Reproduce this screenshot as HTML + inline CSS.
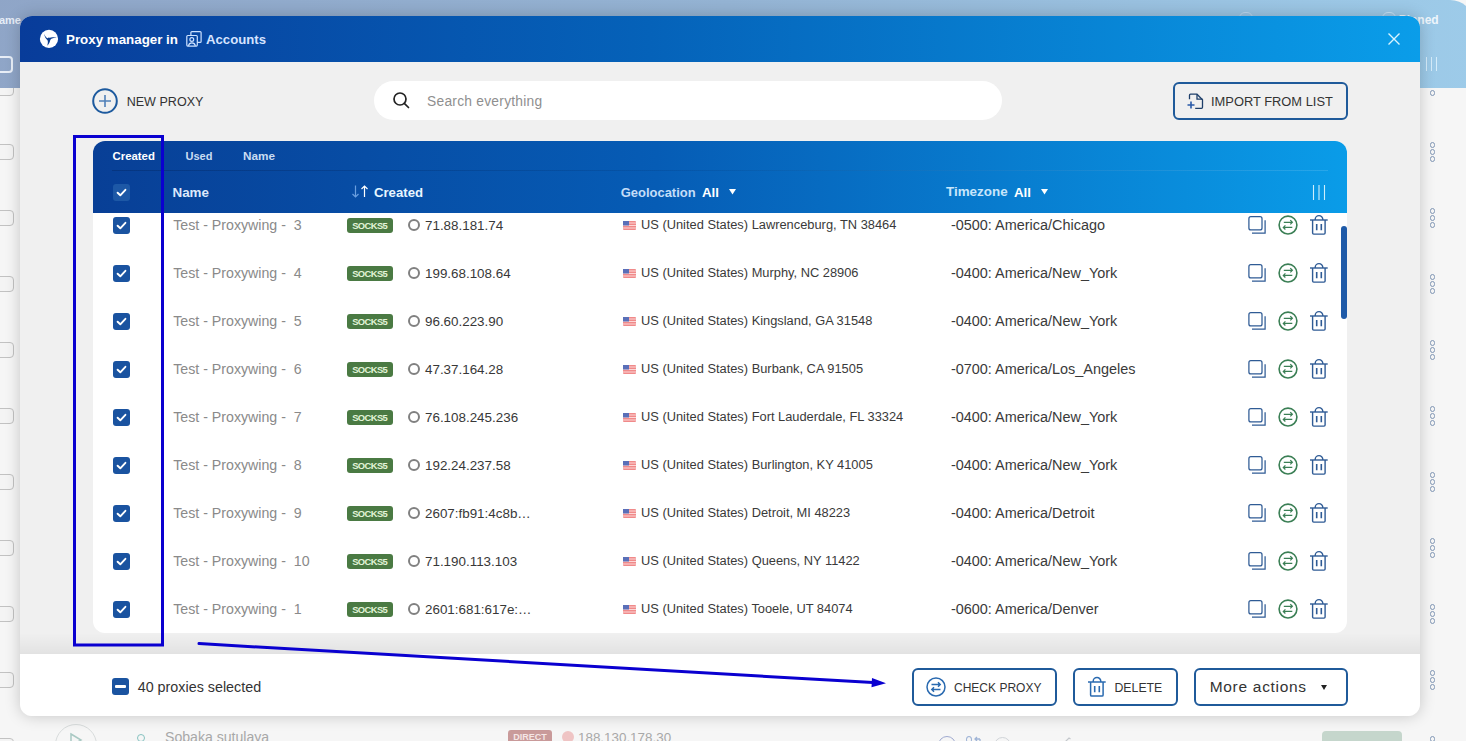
<!DOCTYPE html>
<html><head><meta charset="utf-8">
<style>
*{box-sizing:border-box;margin:0;padding:0}
html,body{width:1466px;height:741px;overflow:hidden}
body{position:relative;background:#f6f6f6;font-family:"Liberation Sans",sans-serif;color:#333}
.a{position:absolute;white-space:pre;line-height:1}
svg{position:absolute;overflow:visible}
#bghead{position:absolute;left:-20px;top:0;width:1494px;height:88px;border-top-right-radius:24px;background:linear-gradient(90deg,#8fa5c7 0%,#94b3d3 50%,#9dcbe9 100%)}
#modal{position:absolute;left:20px;top:16px;width:1400px;height:700px;border-radius:12px;background:#f0f0f0;overflow:hidden;box-shadow:0 0 16px rgba(0,0,0,.2)}
#mhead{position:absolute;left:0;top:0;width:1400px;height:46px;background:linear-gradient(90deg,#083c9a 0%,#0562b9 45%,#0a9de9 100%)}
#footer{position:absolute;left:0;top:638px;width:1400px;height:62px;background:#fff}
#shade{position:absolute;left:0;top:617px;width:1400px;height:21px;background:linear-gradient(180deg,rgba(0,0,0,0) 0%,rgba(0,0,0,.06) 100%)}
#table{position:absolute;left:73px;top:125px;width:1254px;height:492px;border-radius:12px;background:#fff;overflow:hidden}
#thead{position:absolute;left:0;top:0;width:1254px;height:72px;background:linear-gradient(90deg,#083f96 0%,#065cb5 45%,#0a9ce8 100%)}
.cb{position:absolute;width:17px;height:17px;border-radius:3px;background:#1a53a0}
.nm{color:#8c8c8c;font-size:14.2px}
.ip{color:#383838;font-size:13.4px}
.geo{color:#333;font-size:12.7px}
.tz{color:#333;font-size:14.4px}
.badge{position:absolute;width:46px;height:14.5px;border-radius:3px;background:#4a7a43;color:#e2f5d8;font-size:9.4px;font-weight:700;text-align:center;line-height:15.5px;letter-spacing:-0.6px;text-indent:-0.6px}
.btn{position:absolute;border:2px solid #1f5a9a;border-radius:6px;background:#fff}

</style></head>
<body>
<div style="position:absolute;left:-5px;top:80px;width:19px;height:16px;border:1.5px solid #c2c2c2;border-radius:4px;background:#f4f4f4"></div>
<div style="position:absolute;left:-5px;top:144px;width:19px;height:16px;border:1.5px solid #c2c2c2;border-radius:4px;background:#f4f4f4"></div>
<div style="position:absolute;left:-5px;top:210px;width:19px;height:16px;border:1.5px solid #c2c2c2;border-radius:4px;background:#f4f4f4"></div>
<div style="position:absolute;left:-5px;top:276px;width:19px;height:16px;border:1.5px solid #c2c2c2;border-radius:4px;background:#f4f4f4"></div>
<div style="position:absolute;left:-5px;top:342px;width:19px;height:16px;border:1.5px solid #c2c2c2;border-radius:4px;background:#f4f4f4"></div>
<div style="position:absolute;left:-5px;top:408px;width:19px;height:16px;border:1.5px solid #c2c2c2;border-radius:4px;background:#f4f4f4"></div>
<div style="position:absolute;left:-5px;top:474px;width:19px;height:16px;border:1.5px solid #c2c2c2;border-radius:4px;background:#f4f4f4"></div>
<div style="position:absolute;left:-5px;top:540px;width:19px;height:16px;border:1.5px solid #c2c2c2;border-radius:4px;background:#f4f4f4"></div>
<div style="position:absolute;left:-5px;top:606px;width:19px;height:16px;border:1.5px solid #c2c2c2;border-radius:4px;background:#f4f4f4"></div>
<div style="position:absolute;left:-5px;top:672px;width:19px;height:16px;border:1.5px solid #c2c2c2;border-radius:4px;background:#f4f4f4"></div>
<div style="position:absolute;left:-5px;top:738px;width:19px;height:16px;border:1.5px solid #c2c2c2;border-radius:4px;background:#f4f4f4"></div>
<div style="position:absolute;left:1429.5px;top:142.2px;width:5.5px;height:5.5px;border:1.3px solid #8298b6;border-radius:50%"></div>
<div style="position:absolute;left:1429.5px;top:149.2px;width:5.5px;height:5.5px;border:1.3px solid #8298b6;border-radius:50%"></div>
<div style="position:absolute;left:1429.5px;top:156.2px;width:5.5px;height:5.5px;border:1.3px solid #8298b6;border-radius:50%"></div>
<div style="position:absolute;left:1429.5px;top:208.2px;width:5.5px;height:5.5px;border:1.3px solid #8298b6;border-radius:50%"></div>
<div style="position:absolute;left:1429.5px;top:215.2px;width:5.5px;height:5.5px;border:1.3px solid #8298b6;border-radius:50%"></div>
<div style="position:absolute;left:1429.5px;top:222.2px;width:5.5px;height:5.5px;border:1.3px solid #8298b6;border-radius:50%"></div>
<div style="position:absolute;left:1429.5px;top:274.1px;width:5.5px;height:5.5px;border:1.3px solid #8298b6;border-radius:50%"></div>
<div style="position:absolute;left:1429.5px;top:281.1px;width:5.5px;height:5.5px;border:1.3px solid #8298b6;border-radius:50%"></div>
<div style="position:absolute;left:1429.5px;top:288.1px;width:5.5px;height:5.5px;border:1.3px solid #8298b6;border-radius:50%"></div>
<div style="position:absolute;left:1429.5px;top:340.1px;width:5.5px;height:5.5px;border:1.3px solid #8298b6;border-radius:50%"></div>
<div style="position:absolute;left:1429.5px;top:347.1px;width:5.5px;height:5.5px;border:1.3px solid #8298b6;border-radius:50%"></div>
<div style="position:absolute;left:1429.5px;top:354.1px;width:5.5px;height:5.5px;border:1.3px solid #8298b6;border-radius:50%"></div>
<div style="position:absolute;left:1429.5px;top:406.1px;width:5.5px;height:5.5px;border:1.3px solid #8298b6;border-radius:50%"></div>
<div style="position:absolute;left:1429.5px;top:413.1px;width:5.5px;height:5.5px;border:1.3px solid #8298b6;border-radius:50%"></div>
<div style="position:absolute;left:1429.5px;top:420.1px;width:5.5px;height:5.5px;border:1.3px solid #8298b6;border-radius:50%"></div>
<div style="position:absolute;left:1429.5px;top:472.1px;width:5.5px;height:5.5px;border:1.3px solid #8298b6;border-radius:50%"></div>
<div style="position:absolute;left:1429.5px;top:479.1px;width:5.5px;height:5.5px;border:1.3px solid #8298b6;border-radius:50%"></div>
<div style="position:absolute;left:1429.5px;top:486.1px;width:5.5px;height:5.5px;border:1.3px solid #8298b6;border-radius:50%"></div>
<div style="position:absolute;left:1429.5px;top:538.1px;width:5.5px;height:5.5px;border:1.3px solid #8298b6;border-radius:50%"></div>
<div style="position:absolute;left:1429.5px;top:545.1px;width:5.5px;height:5.5px;border:1.3px solid #8298b6;border-radius:50%"></div>
<div style="position:absolute;left:1429.5px;top:552.1px;width:5.5px;height:5.5px;border:1.3px solid #8298b6;border-radius:50%"></div>
<div style="position:absolute;left:1429.5px;top:604.1px;width:5.5px;height:5.5px;border:1.3px solid #8298b6;border-radius:50%"></div>
<div style="position:absolute;left:1429.5px;top:611.1px;width:5.5px;height:5.5px;border:1.3px solid #8298b6;border-radius:50%"></div>
<div style="position:absolute;left:1429.5px;top:618.1px;width:5.5px;height:5.5px;border:1.3px solid #8298b6;border-radius:50%"></div>
<div style="position:absolute;left:1429.5px;top:670.1px;width:5.5px;height:5.5px;border:1.3px solid #8298b6;border-radius:50%"></div>
<div style="position:absolute;left:1429.5px;top:677.1px;width:5.5px;height:5.5px;border:1.3px solid #8298b6;border-radius:50%"></div>
<div style="position:absolute;left:1429.5px;top:684.1px;width:5.5px;height:5.5px;border:1.3px solid #8298b6;border-radius:50%"></div>
<div style="position:absolute;left:1429.5px;top:90.3px;width:5.5px;height:5.5px;border:1.3px solid #8298b6;border-radius:50%"></div>
<div id="bghead"></div>
<div class="a" style="left:-9px;top:14.69px;font-size:11px;font-weight:700;color:#e6edf7;">Name</div>
<div class="a" style="left:1398.7px;top:13.64px;font-size:12px;font-weight:700;color:#eef6fc;">Pinned</div>
<div style="position:absolute;left:1239px;top:12px;width:14px;height:12px;border:1.5px solid #bcd6ee;border-radius:6px"></div>
<div style="position:absolute;left:1382px;top:12px;width:14px;height:12px;border:1.5px solid #c8e2f5;border-radius:6px"></div>
<svg style="left:1424px;top:56px" width="16" height="16" viewBox="0 0 16 16" stroke="#d5ecfa" stroke-width="1"><path d="M2.5 1V15M7.5 1V15M12.5 1V15"/></svg>
<div style="position:absolute;left:-6px;top:56px;width:19px;height:17px;border:2px solid #e8eef7;border-radius:4px"></div>
<div style="position:absolute;left:55px;top:724px;width:42px;height:42px;border:1px solid #d8dcdc;border-radius:50%"></div>
<svg style="left:69px;top:733px" width="14" height="14" viewBox="0 0 14 14"><path d="M2 1 L12 7 L2 13 Z" fill="none" stroke="#a9c9c3" stroke-width="1.5"/></svg>
<div style="position:absolute;left:137px;top:734px;width:8px;height:8px;border:1.5px solid #86c2c0;border-radius:50%"></div>
<div class="a" style="left:165px;top:730.06px;font-size:14.1px;font-weight:400;color:#a8a8a8;">Sobaka sutulaya</div>
<div style="position:absolute;left:508px;top:730px;width:44px;height:14px;border-radius:3px;background:#c99a9a;color:#f5e6e6;font-size:9px;font-weight:700;text-align:center;line-height:14px">DIRECT</div>
<div style="position:absolute;left:562px;top:731px;width:12px;height:12px;border-radius:50%;background:#efc4c4"></div>
<div class="a" style="left:578px;top:730.66px;font-size:13.4px;font-weight:400;color:#a8a8a8;">188.130.178.30</div>
<div style="position:absolute;left:1322px;top:731px;width:80px;height:20px;border-radius:4px;background:#c5d6cc"></div>
<div style="position:absolute;left:938px;top:735.5px;width:18px;height:18px;border:1.6px solid #a0aad0;border-radius:50%"></div>
<div style="position:absolute;left:966px;top:736px;width:6px;height:7px;border:1.4px solid #9fb4d6;border-radius:50%"></div>
<svg style="left:974px;top:736px" width="8" height="8" viewBox="0 0 8 8" fill="none" stroke="#9fb4d6" stroke-width="1.3"><path d="M1 3H6M3 1L1 3L3 5M6 3V8"/></svg>
<div style="position:absolute;left:994px;top:736.5px;width:17px;height:17px;border:1.4px solid #d0d4d8;border-radius:50%"></div>
<svg style="left:1063px;top:737px" width="8" height="6" viewBox="0 0 8 6" fill="none" stroke="#c4c8cc" stroke-width="1.2"><path d="M1 6L6 1L7.5 2"/></svg>
<div style="position:absolute;left:1429.5px;top:736px;width:5.5px;height:5.5px;border:1.3px solid #8298b6;border-radius:50%"></div>
<div id="modal"><div id="mhead"></div><div id="shade"></div><div id="footer"></div>
<div id="table"><div id="thead"></div></div>
</div>
<svg style="left:39px;top:29px" width="20" height="20" viewBox="0 0 20 20">
  <circle cx="10" cy="9.9" r="9.1" fill="#fff"/>
  <path d="M5.0 4.5 C5.6 6.8 7.2 8.6 9.0 9.6 C11.2 8.5 14.5 8.0 17.8 8.5 C14.8 8.9 12.4 9.5 11.4 10.4 C11.0 12.8 9.9 15.0 8.2 16.8 C8.9 14.6 9.1 12.6 8.6 11.2 C6.8 9.8 5.4 7.4 5.0 4.5 Z" fill="#0b3d8f"/>
  <circle cx="9.9" cy="10" r="1.5" fill="#0b3d8f"/>
</svg>
<div class="a" style="left:66px;top:32.90px;font-size:13.35px;font-weight:700;color:#fff;">Proxy manager in</div>
<svg style="left:186px;top:31px" width="17" height="17" viewBox="0 0 17 17" fill="none" stroke="#cde2ff" stroke-width="1.2">
  <rect x="0.8" y="4.5" width="10.5" height="10.6" rx="1"/>
  <path d="M4.9 4.5 V1.6 a1 1 0 0 1 1 -1 H14.1 a1 1 0 0 1 1 1 V10.4 a1 1 0 0 1 -1 1 H11.3"/>
  <circle cx="5.8" cy="8.5" r="1.9"/>
  <path d="M2.4 14.8 C2.9 12.6 4.2 11.8 5.9 11.8 C7.6 11.8 8.9 12.6 9.4 14.8"/>
</svg>
<div class="a" style="left:206px;top:33.05px;font-size:13.17px;font-weight:700;color:#d6e4ff;">Accounts</div>
<svg style="left:1388px;top:33px" width="12" height="12" viewBox="0 0 12 12" stroke="#d8f4ff" stroke-width="1.4"><path d="M0.5 0.5 L11.5 11.5 M11.5 0.5 L0.5 11.5"/></svg>
<svg style="left:92px;top:88px" width="26" height="26" viewBox="0 0 26 26"><circle cx="13" cy="13" r="11.8" fill="none" stroke="#1d5a9e" stroke-width="2"/><path d="M13 7V19M7 13H19" stroke="#5080b8" stroke-width="1.6"/></svg>
<div class="a" style="left:126.7px;top:95.88px;font-size:12.55px;font-weight:400;color:#333;">NEW PROXY</div>
<div style="position:absolute;left:374px;top:81px;width:628px;height:39px;border-radius:19.5px;background:#fff"></div>
<svg style="left:392px;top:91px" width="18" height="18" viewBox="0 0 18 18" fill="none" stroke="#222" stroke-width="1.7"><circle cx="8" cy="8" r="6"/><path d="M12.3 12.3L16.5 16.5" stroke-linecap="round"/></svg>
<div class="a" style="left:427px;top:94.62px;font-size:13.8px;font-weight:400;color:#8f8f8f;letter-spacing:0.25px">Search everything</div>
<div class="btn" style="left:1173px;top:82px;width:175px;height:38px;background:transparent"></div>
<svg style="left:1186px;top:92px" width="18" height="18" viewBox="0 0 18 18" fill="none"><path d="M3.5 7.2V3.2a1 1 0 0 1 1-1H11l5.5 5.5V15.3a1 1 0 0 1-1 1H9.2" stroke="#1e3f6a" stroke-width="1.3"/><path d="M11 2.2V7.2H16.5" stroke="#1e3f6a" stroke-width="1.3"/><path d="M5 9.5V16.5M1.5 13H8.5" stroke="#2a5aa8" stroke-width="1.6"/></svg>
<div class="a" style="left:1211px;top:95.59px;font-size:12.89px;font-weight:400;color:#333;">IMPORT FROM LIST</div>
<div class="a" style="left:112.5px;top:150.75px;font-size:11.4px;font-weight:700;color:#fff;">Created</div>
<div class="a" style="left:185.5px;top:151.05px;font-size:11.04px;font-weight:700;color:#c9dcf2;">Used</div>
<div class="a" style="left:243px;top:150.45px;font-size:11.75px;font-weight:700;color:#c9dcf2;">Name</div>
<div style="position:absolute;left:112px;top:170px;width:1216px;height:1px;background:linear-gradient(90deg,rgba(0,20,60,.25),rgba(0,20,60,.1) 50%,rgba(255,255,255,.12))"></div>
<div class="cb" style="left:113px;top:184px;background:#1d58a6"><svg style="left:0;top:0" width="17" height="17" viewBox="0 0 17 17"><path d="M4.6 8.7 L7.3 11.3 L12.4 5.8" fill="none" stroke="#fff" stroke-width="1.9" stroke-linecap="round" stroke-linejoin="round"/></svg></div>
<div class="a" style="left:172.5px;top:185.96px;font-size:13.4px;font-weight:700;color:#dce8fb;">Name</div>
<svg style="left:351px;top:185px" width="18" height="13" viewBox="0 0 18 13" fill="none" stroke-width="1.2"><path d="M4.5 0.5V12M1.5 9L4.5 12L7.5 9" stroke="#6a9fe0"/><path d="M13.5 12V1M10.5 4L13.5 1L16.5 4" stroke="#fff"/></svg>
<div class="a" style="left:374px;top:185.66px;font-size:13.16px;font-weight:700;color:#e8f6ff;">Created</div>
<div class="a" style="left:620.7px;top:185.81px;font-size:12.98px;font-weight:700;color:#c4ddf8;">Geolocation</div>
<div class="a" style="left:702px;top:185.54px;font-size:13.3px;font-weight:700;color:#fff;">All</div>
<svg style="left:728.5px;top:189.3px" width="7" height="6" viewBox="0 0 7 6"><path d="M0 0H7L3.5 5.4Z" fill="#fff"/></svg>
<div class="a" style="left:946px;top:185.45px;font-size:13.41px;font-weight:700;color:#c8e6fb;">Timezone</div>
<div class="a" style="left:1014px;top:185.54px;font-size:13.3px;font-weight:700;color:#fff;">All</div>
<svg style="left:1040.5px;top:189.3px" width="7" height="6" viewBox="0 0 7 6"><path d="M0 0H7L3.5 5.4Z" fill="#fff"/></svg>
<svg style="left:1312px;top:185px" width="14" height="15" viewBox="0 0 14 15" stroke="#cdeefc" stroke-width="1.1"><path d="M1.5 0V15M7 0V15M12.5 0V15"/></svg>
<div class="cb" style="left:113px;top:217px"><svg style="left:0;top:0" width="17" height="17" viewBox="0 0 17 17"><path d="M4.6 8.7 L7.3 11.3 L12.4 5.8" fill="none" stroke="#fff" stroke-width="1.9" stroke-linecap="round" stroke-linejoin="round"/></svg></div>
<div class="a" style="left:173.2px;top:218.38px;font-size:14.2px;font-weight:400;color:#8a8a8a;">Test - Proxywing -  3</div>
<div class="badge" style="left:347px;top:218px">SOCKS5</div>
<div style="position:absolute;left:408px;top:219px;width:12px;height:12px;border:2px solid #808080;border-radius:50%"></div>
<div class="a" style="left:425px;top:218.96px;font-size:13.4px;font-weight:400;color:#383838;">71.88.181.74</div>
<svg style="left:623px;top:221px" width="13" height="9" viewBox="0 0 13 9"><rect width="13" height="9" rx="1" fill="#f08a8a"/><path d="M0 2H13M0 4.5H13M0 7H13" stroke="#fde0e0" stroke-width="0.9"/><rect width="6" height="4.5" fill="#5a6fb8"/></svg>
<div class="a" style="left:641px;top:218.52px;font-size:12.85px;font-weight:400;color:#3a3a3a;">US (United States) Lawrenceburg, TN 38464</div>
<div class="a" style="left:950.9px;top:217.97px;font-size:14.45px;font-weight:400;color:#3a3a3a;">-0500: America/Chicago</div>
<svg style="left:1247px;top:215px" width="20" height="20" viewBox="0 0 20 20" fill="none" stroke="#2f5b95" stroke-width="1.25"><rect x="1.9" y="1.7" width="13.1" height="13.2" rx="2"/><path d="M18.1 5.2V18H5"/></svg>
<svg style="left:1278px;top:215px" width="20" height="20" viewBox="0 0 20 20" fill="none" stroke="#3b7f55"><circle cx="10" cy="10.05" r="8.9" stroke-width="1.6"/><path d="M5.8 7.3H14.4M12.3 5.2L14.4 7.3L12.3 9.4" stroke-width="1.2"/><path d="M14.3 12.4H5.3M7.4 10.3L5.3 12.4L7.4 14.5" stroke-width="1.2"/></svg>
<svg style="left:1309px;top:215px" width="20" height="20" viewBox="0 0 20 20" fill="none" stroke="#2f5b95" stroke-width="1.4"><path d="M1 5H18.7"/><path d="M6.2 5V4.2a3.8 3.6 0 0 1 7.6 0V5"/><path d="M3.6 5V18a1.1 1.1 0 0 0 1.1 1.1H15a1.1 1.1 0 0 0 1.1-1.1V5"/><path d="M7.7 9V15.3M12.3 9V15.3" stroke-width="1.6"/></svg>
<div class="cb" style="left:113px;top:265px"><svg style="left:0;top:0" width="17" height="17" viewBox="0 0 17 17"><path d="M4.6 8.7 L7.3 11.3 L12.4 5.8" fill="none" stroke="#fff" stroke-width="1.9" stroke-linecap="round" stroke-linejoin="round"/></svg></div>
<div class="a" style="left:173.2px;top:266.38px;font-size:14.2px;font-weight:400;color:#8a8a8a;">Test - Proxywing -  4</div>
<div class="badge" style="left:347px;top:266px">SOCKS5</div>
<div style="position:absolute;left:408px;top:267px;width:12px;height:12px;border:2px solid #808080;border-radius:50%"></div>
<div class="a" style="left:425px;top:266.96px;font-size:13.4px;font-weight:400;color:#383838;">199.68.108.64</div>
<svg style="left:623px;top:269px" width="13" height="9" viewBox="0 0 13 9"><rect width="13" height="9" rx="1" fill="#f08a8a"/><path d="M0 2H13M0 4.5H13M0 7H13" stroke="#fde0e0" stroke-width="0.9"/><rect width="6" height="4.5" fill="#5a6fb8"/></svg>
<div class="a" style="left:641px;top:266.52px;font-size:12.85px;font-weight:400;color:#3a3a3a;">US (United States) Murphy, NC 28906</div>
<div class="a" style="left:950.9px;top:265.97px;font-size:14.45px;font-weight:400;color:#3a3a3a;">-0400: America/New_York</div>
<svg style="left:1247px;top:263px" width="20" height="20" viewBox="0 0 20 20" fill="none" stroke="#2f5b95" stroke-width="1.25"><rect x="1.9" y="1.7" width="13.1" height="13.2" rx="2"/><path d="M18.1 5.2V18H5"/></svg>
<svg style="left:1278px;top:263px" width="20" height="20" viewBox="0 0 20 20" fill="none" stroke="#3b7f55"><circle cx="10" cy="10.05" r="8.9" stroke-width="1.6"/><path d="M5.8 7.3H14.4M12.3 5.2L14.4 7.3L12.3 9.4" stroke-width="1.2"/><path d="M14.3 12.4H5.3M7.4 10.3L5.3 12.4L7.4 14.5" stroke-width="1.2"/></svg>
<svg style="left:1309px;top:263px" width="20" height="20" viewBox="0 0 20 20" fill="none" stroke="#2f5b95" stroke-width="1.4"><path d="M1 5H18.7"/><path d="M6.2 5V4.2a3.8 3.6 0 0 1 7.6 0V5"/><path d="M3.6 5V18a1.1 1.1 0 0 0 1.1 1.1H15a1.1 1.1 0 0 0 1.1-1.1V5"/><path d="M7.7 9V15.3M12.3 9V15.3" stroke-width="1.6"/></svg>
<div class="cb" style="left:113px;top:313px"><svg style="left:0;top:0" width="17" height="17" viewBox="0 0 17 17"><path d="M4.6 8.7 L7.3 11.3 L12.4 5.8" fill="none" stroke="#fff" stroke-width="1.9" stroke-linecap="round" stroke-linejoin="round"/></svg></div>
<div class="a" style="left:173.2px;top:314.38px;font-size:14.2px;font-weight:400;color:#8a8a8a;">Test - Proxywing -  5</div>
<div class="badge" style="left:347px;top:314px">SOCKS5</div>
<div style="position:absolute;left:408px;top:315px;width:12px;height:12px;border:2px solid #808080;border-radius:50%"></div>
<div class="a" style="left:425px;top:314.96px;font-size:13.4px;font-weight:400;color:#383838;">96.60.223.90</div>
<svg style="left:623px;top:317px" width="13" height="9" viewBox="0 0 13 9"><rect width="13" height="9" rx="1" fill="#f08a8a"/><path d="M0 2H13M0 4.5H13M0 7H13" stroke="#fde0e0" stroke-width="0.9"/><rect width="6" height="4.5" fill="#5a6fb8"/></svg>
<div class="a" style="left:641px;top:314.52px;font-size:12.85px;font-weight:400;color:#3a3a3a;">US (United States) Kingsland, GA 31548</div>
<div class="a" style="left:950.9px;top:313.97px;font-size:14.45px;font-weight:400;color:#3a3a3a;">-0400: America/New_York</div>
<svg style="left:1247px;top:311px" width="20" height="20" viewBox="0 0 20 20" fill="none" stroke="#2f5b95" stroke-width="1.25"><rect x="1.9" y="1.7" width="13.1" height="13.2" rx="2"/><path d="M18.1 5.2V18H5"/></svg>
<svg style="left:1278px;top:311px" width="20" height="20" viewBox="0 0 20 20" fill="none" stroke="#3b7f55"><circle cx="10" cy="10.05" r="8.9" stroke-width="1.6"/><path d="M5.8 7.3H14.4M12.3 5.2L14.4 7.3L12.3 9.4" stroke-width="1.2"/><path d="M14.3 12.4H5.3M7.4 10.3L5.3 12.4L7.4 14.5" stroke-width="1.2"/></svg>
<svg style="left:1309px;top:311px" width="20" height="20" viewBox="0 0 20 20" fill="none" stroke="#2f5b95" stroke-width="1.4"><path d="M1 5H18.7"/><path d="M6.2 5V4.2a3.8 3.6 0 0 1 7.6 0V5"/><path d="M3.6 5V18a1.1 1.1 0 0 0 1.1 1.1H15a1.1 1.1 0 0 0 1.1-1.1V5"/><path d="M7.7 9V15.3M12.3 9V15.3" stroke-width="1.6"/></svg>
<div class="cb" style="left:113px;top:361px"><svg style="left:0;top:0" width="17" height="17" viewBox="0 0 17 17"><path d="M4.6 8.7 L7.3 11.3 L12.4 5.8" fill="none" stroke="#fff" stroke-width="1.9" stroke-linecap="round" stroke-linejoin="round"/></svg></div>
<div class="a" style="left:173.2px;top:362.38px;font-size:14.2px;font-weight:400;color:#8a8a8a;">Test - Proxywing -  6</div>
<div class="badge" style="left:347px;top:362px">SOCKS5</div>
<div style="position:absolute;left:408px;top:363px;width:12px;height:12px;border:2px solid #808080;border-radius:50%"></div>
<div class="a" style="left:425px;top:362.96px;font-size:13.4px;font-weight:400;color:#383838;">47.37.164.28</div>
<svg style="left:623px;top:365px" width="13" height="9" viewBox="0 0 13 9"><rect width="13" height="9" rx="1" fill="#f08a8a"/><path d="M0 2H13M0 4.5H13M0 7H13" stroke="#fde0e0" stroke-width="0.9"/><rect width="6" height="4.5" fill="#5a6fb8"/></svg>
<div class="a" style="left:641px;top:362.52px;font-size:12.85px;font-weight:400;color:#3a3a3a;">US (United States) Burbank, CA 91505</div>
<div class="a" style="left:950.9px;top:361.97px;font-size:14.45px;font-weight:400;color:#3a3a3a;">-0700: America/Los_Angeles</div>
<svg style="left:1247px;top:359px" width="20" height="20" viewBox="0 0 20 20" fill="none" stroke="#2f5b95" stroke-width="1.25"><rect x="1.9" y="1.7" width="13.1" height="13.2" rx="2"/><path d="M18.1 5.2V18H5"/></svg>
<svg style="left:1278px;top:359px" width="20" height="20" viewBox="0 0 20 20" fill="none" stroke="#3b7f55"><circle cx="10" cy="10.05" r="8.9" stroke-width="1.6"/><path d="M5.8 7.3H14.4M12.3 5.2L14.4 7.3L12.3 9.4" stroke-width="1.2"/><path d="M14.3 12.4H5.3M7.4 10.3L5.3 12.4L7.4 14.5" stroke-width="1.2"/></svg>
<svg style="left:1309px;top:359px" width="20" height="20" viewBox="0 0 20 20" fill="none" stroke="#2f5b95" stroke-width="1.4"><path d="M1 5H18.7"/><path d="M6.2 5V4.2a3.8 3.6 0 0 1 7.6 0V5"/><path d="M3.6 5V18a1.1 1.1 0 0 0 1.1 1.1H15a1.1 1.1 0 0 0 1.1-1.1V5"/><path d="M7.7 9V15.3M12.3 9V15.3" stroke-width="1.6"/></svg>
<div class="cb" style="left:113px;top:409px"><svg style="left:0;top:0" width="17" height="17" viewBox="0 0 17 17"><path d="M4.6 8.7 L7.3 11.3 L12.4 5.8" fill="none" stroke="#fff" stroke-width="1.9" stroke-linecap="round" stroke-linejoin="round"/></svg></div>
<div class="a" style="left:173.2px;top:410.38px;font-size:14.2px;font-weight:400;color:#8a8a8a;">Test - Proxywing -  7</div>
<div class="badge" style="left:347px;top:410px">SOCKS5</div>
<div style="position:absolute;left:408px;top:411px;width:12px;height:12px;border:2px solid #808080;border-radius:50%"></div>
<div class="a" style="left:425px;top:410.96px;font-size:13.4px;font-weight:400;color:#383838;">76.108.245.236</div>
<svg style="left:623px;top:413px" width="13" height="9" viewBox="0 0 13 9"><rect width="13" height="9" rx="1" fill="#f08a8a"/><path d="M0 2H13M0 4.5H13M0 7H13" stroke="#fde0e0" stroke-width="0.9"/><rect width="6" height="4.5" fill="#5a6fb8"/></svg>
<div class="a" style="left:641px;top:410.52px;font-size:12.85px;font-weight:400;color:#3a3a3a;">US (United States) Fort Lauderdale, FL 33324</div>
<div class="a" style="left:950.9px;top:409.97px;font-size:14.45px;font-weight:400;color:#3a3a3a;">-0400: America/New_York</div>
<svg style="left:1247px;top:407px" width="20" height="20" viewBox="0 0 20 20" fill="none" stroke="#2f5b95" stroke-width="1.25"><rect x="1.9" y="1.7" width="13.1" height="13.2" rx="2"/><path d="M18.1 5.2V18H5"/></svg>
<svg style="left:1278px;top:407px" width="20" height="20" viewBox="0 0 20 20" fill="none" stroke="#3b7f55"><circle cx="10" cy="10.05" r="8.9" stroke-width="1.6"/><path d="M5.8 7.3H14.4M12.3 5.2L14.4 7.3L12.3 9.4" stroke-width="1.2"/><path d="M14.3 12.4H5.3M7.4 10.3L5.3 12.4L7.4 14.5" stroke-width="1.2"/></svg>
<svg style="left:1309px;top:407px" width="20" height="20" viewBox="0 0 20 20" fill="none" stroke="#2f5b95" stroke-width="1.4"><path d="M1 5H18.7"/><path d="M6.2 5V4.2a3.8 3.6 0 0 1 7.6 0V5"/><path d="M3.6 5V18a1.1 1.1 0 0 0 1.1 1.1H15a1.1 1.1 0 0 0 1.1-1.1V5"/><path d="M7.7 9V15.3M12.3 9V15.3" stroke-width="1.6"/></svg>
<div class="cb" style="left:113px;top:457px"><svg style="left:0;top:0" width="17" height="17" viewBox="0 0 17 17"><path d="M4.6 8.7 L7.3 11.3 L12.4 5.8" fill="none" stroke="#fff" stroke-width="1.9" stroke-linecap="round" stroke-linejoin="round"/></svg></div>
<div class="a" style="left:173.2px;top:458.38px;font-size:14.2px;font-weight:400;color:#8a8a8a;">Test - Proxywing -  8</div>
<div class="badge" style="left:347px;top:458px">SOCKS5</div>
<div style="position:absolute;left:408px;top:459px;width:12px;height:12px;border:2px solid #808080;border-radius:50%"></div>
<div class="a" style="left:425px;top:458.96px;font-size:13.4px;font-weight:400;color:#383838;">192.24.237.58</div>
<svg style="left:623px;top:461px" width="13" height="9" viewBox="0 0 13 9"><rect width="13" height="9" rx="1" fill="#f08a8a"/><path d="M0 2H13M0 4.5H13M0 7H13" stroke="#fde0e0" stroke-width="0.9"/><rect width="6" height="4.5" fill="#5a6fb8"/></svg>
<div class="a" style="left:641px;top:458.52px;font-size:12.85px;font-weight:400;color:#3a3a3a;">US (United States) Burlington, KY 41005</div>
<div class="a" style="left:950.9px;top:457.97px;font-size:14.45px;font-weight:400;color:#3a3a3a;">-0400: America/New_York</div>
<svg style="left:1247px;top:455px" width="20" height="20" viewBox="0 0 20 20" fill="none" stroke="#2f5b95" stroke-width="1.25"><rect x="1.9" y="1.7" width="13.1" height="13.2" rx="2"/><path d="M18.1 5.2V18H5"/></svg>
<svg style="left:1278px;top:455px" width="20" height="20" viewBox="0 0 20 20" fill="none" stroke="#3b7f55"><circle cx="10" cy="10.05" r="8.9" stroke-width="1.6"/><path d="M5.8 7.3H14.4M12.3 5.2L14.4 7.3L12.3 9.4" stroke-width="1.2"/><path d="M14.3 12.4H5.3M7.4 10.3L5.3 12.4L7.4 14.5" stroke-width="1.2"/></svg>
<svg style="left:1309px;top:455px" width="20" height="20" viewBox="0 0 20 20" fill="none" stroke="#2f5b95" stroke-width="1.4"><path d="M1 5H18.7"/><path d="M6.2 5V4.2a3.8 3.6 0 0 1 7.6 0V5"/><path d="M3.6 5V18a1.1 1.1 0 0 0 1.1 1.1H15a1.1 1.1 0 0 0 1.1-1.1V5"/><path d="M7.7 9V15.3M12.3 9V15.3" stroke-width="1.6"/></svg>
<div class="cb" style="left:113px;top:505px"><svg style="left:0;top:0" width="17" height="17" viewBox="0 0 17 17"><path d="M4.6 8.7 L7.3 11.3 L12.4 5.8" fill="none" stroke="#fff" stroke-width="1.9" stroke-linecap="round" stroke-linejoin="round"/></svg></div>
<div class="a" style="left:173.2px;top:506.38px;font-size:14.2px;font-weight:400;color:#8a8a8a;">Test - Proxywing -  9</div>
<div class="badge" style="left:347px;top:506px">SOCKS5</div>
<div style="position:absolute;left:408px;top:507px;width:12px;height:12px;border:2px solid #808080;border-radius:50%"></div>
<div class="a" style="left:425px;top:506.96px;font-size:13.4px;font-weight:400;color:#383838;">2607:fb91:4c8b…</div>
<svg style="left:623px;top:509px" width="13" height="9" viewBox="0 0 13 9"><rect width="13" height="9" rx="1" fill="#f08a8a"/><path d="M0 2H13M0 4.5H13M0 7H13" stroke="#fde0e0" stroke-width="0.9"/><rect width="6" height="4.5" fill="#5a6fb8"/></svg>
<div class="a" style="left:641px;top:506.52px;font-size:12.85px;font-weight:400;color:#3a3a3a;">US (United States) Detroit, MI 48223</div>
<div class="a" style="left:950.9px;top:505.97px;font-size:14.45px;font-weight:400;color:#3a3a3a;">-0400: America/Detroit</div>
<svg style="left:1247px;top:503px" width="20" height="20" viewBox="0 0 20 20" fill="none" stroke="#2f5b95" stroke-width="1.25"><rect x="1.9" y="1.7" width="13.1" height="13.2" rx="2"/><path d="M18.1 5.2V18H5"/></svg>
<svg style="left:1278px;top:503px" width="20" height="20" viewBox="0 0 20 20" fill="none" stroke="#3b7f55"><circle cx="10" cy="10.05" r="8.9" stroke-width="1.6"/><path d="M5.8 7.3H14.4M12.3 5.2L14.4 7.3L12.3 9.4" stroke-width="1.2"/><path d="M14.3 12.4H5.3M7.4 10.3L5.3 12.4L7.4 14.5" stroke-width="1.2"/></svg>
<svg style="left:1309px;top:503px" width="20" height="20" viewBox="0 0 20 20" fill="none" stroke="#2f5b95" stroke-width="1.4"><path d="M1 5H18.7"/><path d="M6.2 5V4.2a3.8 3.6 0 0 1 7.6 0V5"/><path d="M3.6 5V18a1.1 1.1 0 0 0 1.1 1.1H15a1.1 1.1 0 0 0 1.1-1.1V5"/><path d="M7.7 9V15.3M12.3 9V15.3" stroke-width="1.6"/></svg>
<div class="cb" style="left:113px;top:553px"><svg style="left:0;top:0" width="17" height="17" viewBox="0 0 17 17"><path d="M4.6 8.7 L7.3 11.3 L12.4 5.8" fill="none" stroke="#fff" stroke-width="1.9" stroke-linecap="round" stroke-linejoin="round"/></svg></div>
<div class="a" style="left:173.2px;top:554.38px;font-size:14.2px;font-weight:400;color:#8a8a8a;">Test - Proxywing -  10</div>
<div class="badge" style="left:347px;top:554px">SOCKS5</div>
<div style="position:absolute;left:408px;top:555px;width:12px;height:12px;border:2px solid #808080;border-radius:50%"></div>
<div class="a" style="left:425px;top:554.96px;font-size:13.4px;font-weight:400;color:#383838;">71.190.113.103</div>
<svg style="left:623px;top:557px" width="13" height="9" viewBox="0 0 13 9"><rect width="13" height="9" rx="1" fill="#f08a8a"/><path d="M0 2H13M0 4.5H13M0 7H13" stroke="#fde0e0" stroke-width="0.9"/><rect width="6" height="4.5" fill="#5a6fb8"/></svg>
<div class="a" style="left:641px;top:554.52px;font-size:12.85px;font-weight:400;color:#3a3a3a;">US (United States) Queens, NY 11422</div>
<div class="a" style="left:950.9px;top:553.97px;font-size:14.45px;font-weight:400;color:#3a3a3a;">-0400: America/New_York</div>
<svg style="left:1247px;top:551px" width="20" height="20" viewBox="0 0 20 20" fill="none" stroke="#2f5b95" stroke-width="1.25"><rect x="1.9" y="1.7" width="13.1" height="13.2" rx="2"/><path d="M18.1 5.2V18H5"/></svg>
<svg style="left:1278px;top:551px" width="20" height="20" viewBox="0 0 20 20" fill="none" stroke="#3b7f55"><circle cx="10" cy="10.05" r="8.9" stroke-width="1.6"/><path d="M5.8 7.3H14.4M12.3 5.2L14.4 7.3L12.3 9.4" stroke-width="1.2"/><path d="M14.3 12.4H5.3M7.4 10.3L5.3 12.4L7.4 14.5" stroke-width="1.2"/></svg>
<svg style="left:1309px;top:551px" width="20" height="20" viewBox="0 0 20 20" fill="none" stroke="#2f5b95" stroke-width="1.4"><path d="M1 5H18.7"/><path d="M6.2 5V4.2a3.8 3.6 0 0 1 7.6 0V5"/><path d="M3.6 5V18a1.1 1.1 0 0 0 1.1 1.1H15a1.1 1.1 0 0 0 1.1-1.1V5"/><path d="M7.7 9V15.3M12.3 9V15.3" stroke-width="1.6"/></svg>
<div class="cb" style="left:113px;top:601px"><svg style="left:0;top:0" width="17" height="17" viewBox="0 0 17 17"><path d="M4.6 8.7 L7.3 11.3 L12.4 5.8" fill="none" stroke="#fff" stroke-width="1.9" stroke-linecap="round" stroke-linejoin="round"/></svg></div>
<div class="a" style="left:173.2px;top:602.38px;font-size:14.2px;font-weight:400;color:#8a8a8a;">Test - Proxywing -  1</div>
<div class="badge" style="left:347px;top:602px">SOCKS5</div>
<div style="position:absolute;left:408px;top:603px;width:12px;height:12px;border:2px solid #808080;border-radius:50%"></div>
<div class="a" style="left:425px;top:602.96px;font-size:13.4px;font-weight:400;color:#383838;">2601:681:617e:…</div>
<svg style="left:623px;top:605px" width="13" height="9" viewBox="0 0 13 9"><rect width="13" height="9" rx="1" fill="#f08a8a"/><path d="M0 2H13M0 4.5H13M0 7H13" stroke="#fde0e0" stroke-width="0.9"/><rect width="6" height="4.5" fill="#5a6fb8"/></svg>
<div class="a" style="left:641px;top:602.52px;font-size:12.85px;font-weight:400;color:#3a3a3a;">US (United States) Tooele, UT 84074</div>
<div class="a" style="left:950.9px;top:601.97px;font-size:14.45px;font-weight:400;color:#3a3a3a;">-0600: America/Denver</div>
<svg style="left:1247px;top:599px" width="20" height="20" viewBox="0 0 20 20" fill="none" stroke="#2f5b95" stroke-width="1.25"><rect x="1.9" y="1.7" width="13.1" height="13.2" rx="2"/><path d="M18.1 5.2V18H5"/></svg>
<svg style="left:1278px;top:599px" width="20" height="20" viewBox="0 0 20 20" fill="none" stroke="#3b7f55"><circle cx="10" cy="10.05" r="8.9" stroke-width="1.6"/><path d="M5.8 7.3H14.4M12.3 5.2L14.4 7.3L12.3 9.4" stroke-width="1.2"/><path d="M14.3 12.4H5.3M7.4 10.3L5.3 12.4L7.4 14.5" stroke-width="1.2"/></svg>
<svg style="left:1309px;top:599px" width="20" height="20" viewBox="0 0 20 20" fill="none" stroke="#2f5b95" stroke-width="1.4"><path d="M1 5H18.7"/><path d="M6.2 5V4.2a3.8 3.6 0 0 1 7.6 0V5"/><path d="M3.6 5V18a1.1 1.1 0 0 0 1.1 1.1H15a1.1 1.1 0 0 0 1.1-1.1V5"/><path d="M7.7 9V15.3M12.3 9V15.3" stroke-width="1.6"/></svg>
<div style="position:absolute;left:1341px;top:226px;width:6px;height:93px;border-radius:3px;background:#1e5aa8"></div>
<div class="cb" style="left:112px;top:678px"><div style="position:absolute;left:3px;top:7px;width:11px;height:3px;background:#fff;border-radius:1px"></div></div>
<div class="a" style="left:137.7px;top:679.67px;font-size:14.33px;font-weight:400;color:#333;">40 proxies selected</div>
<div class="btn" style="left:912px;top:668px;width:145px;height:38px"></div>
<svg style="left:926px;top:677px" width="20" height="20" viewBox="0 0 20 20" fill="none" stroke="#2a6ab0"><circle cx="10" cy="10" r="9" stroke-width="1.5"/><path d="M5.5 7.5H14.2M12 5.3L14.2 7.5L12 9.7" stroke-width="1.5"/><path d="M14.5 12.5H5.8M8 10.3L5.8 12.5L8 14.7" stroke-width="1.5"/></svg>
<div class="a" style="left:954px;top:681.73px;font-size:12.02px;font-weight:400;color:#333;">CHECK PROXY</div>
<div class="btn" style="left:1073px;top:668px;width:105px;height:38px"></div>
<svg style="left:1087px;top:677px" width="20" height="20" viewBox="0 0 20 20" fill="none" stroke="#2a6ab0" stroke-width="1.5"><path d="M1 5H18.7"/><path d="M6.2 5V4.2a3.8 3.6 0 0 1 7.6 0V5"/><path d="M3.6 5V18a1.1 1.1 0 0 0 1.1 1.1H15a1.1 1.1 0 0 0 1.1-1.1V5"/><path d="M7.7 9V15.3M12.3 9V15.3" stroke-width="1.6"/></svg>
<div class="a" style="left:1114.5px;top:681.50px;font-size:12.29px;font-weight:400;color:#333;">DELETE</div>
<div class="btn" style="left:1194px;top:668px;width:154px;height:38px"></div>
<div class="a" style="left:1209.7px;top:678.88px;font-size:15.5px;font-weight:400;color:#333;letter-spacing:0.7px">More actions</div>
<svg style="left:1321px;top:684.6px" width="6" height="5" viewBox="0 0 6 5"><path d="M0 0H6L3 5Z" fill="#222"/></svg>
<svg style="left:0;top:0" width="1466" height="741" viewBox="0 0 1466 741"><rect x="74.5" y="136.5" width="88" height="508.5" fill="none" stroke="#0a00d0" stroke-width="3"/><path d="M199 643.6 L873 682.6" stroke="#0a00d0" stroke-width="3" stroke-linecap="round"/><path d="M872 678 L886 683.3 L871.5 687.3 Z" fill="#0a00d0"/></svg>
</body></html>
